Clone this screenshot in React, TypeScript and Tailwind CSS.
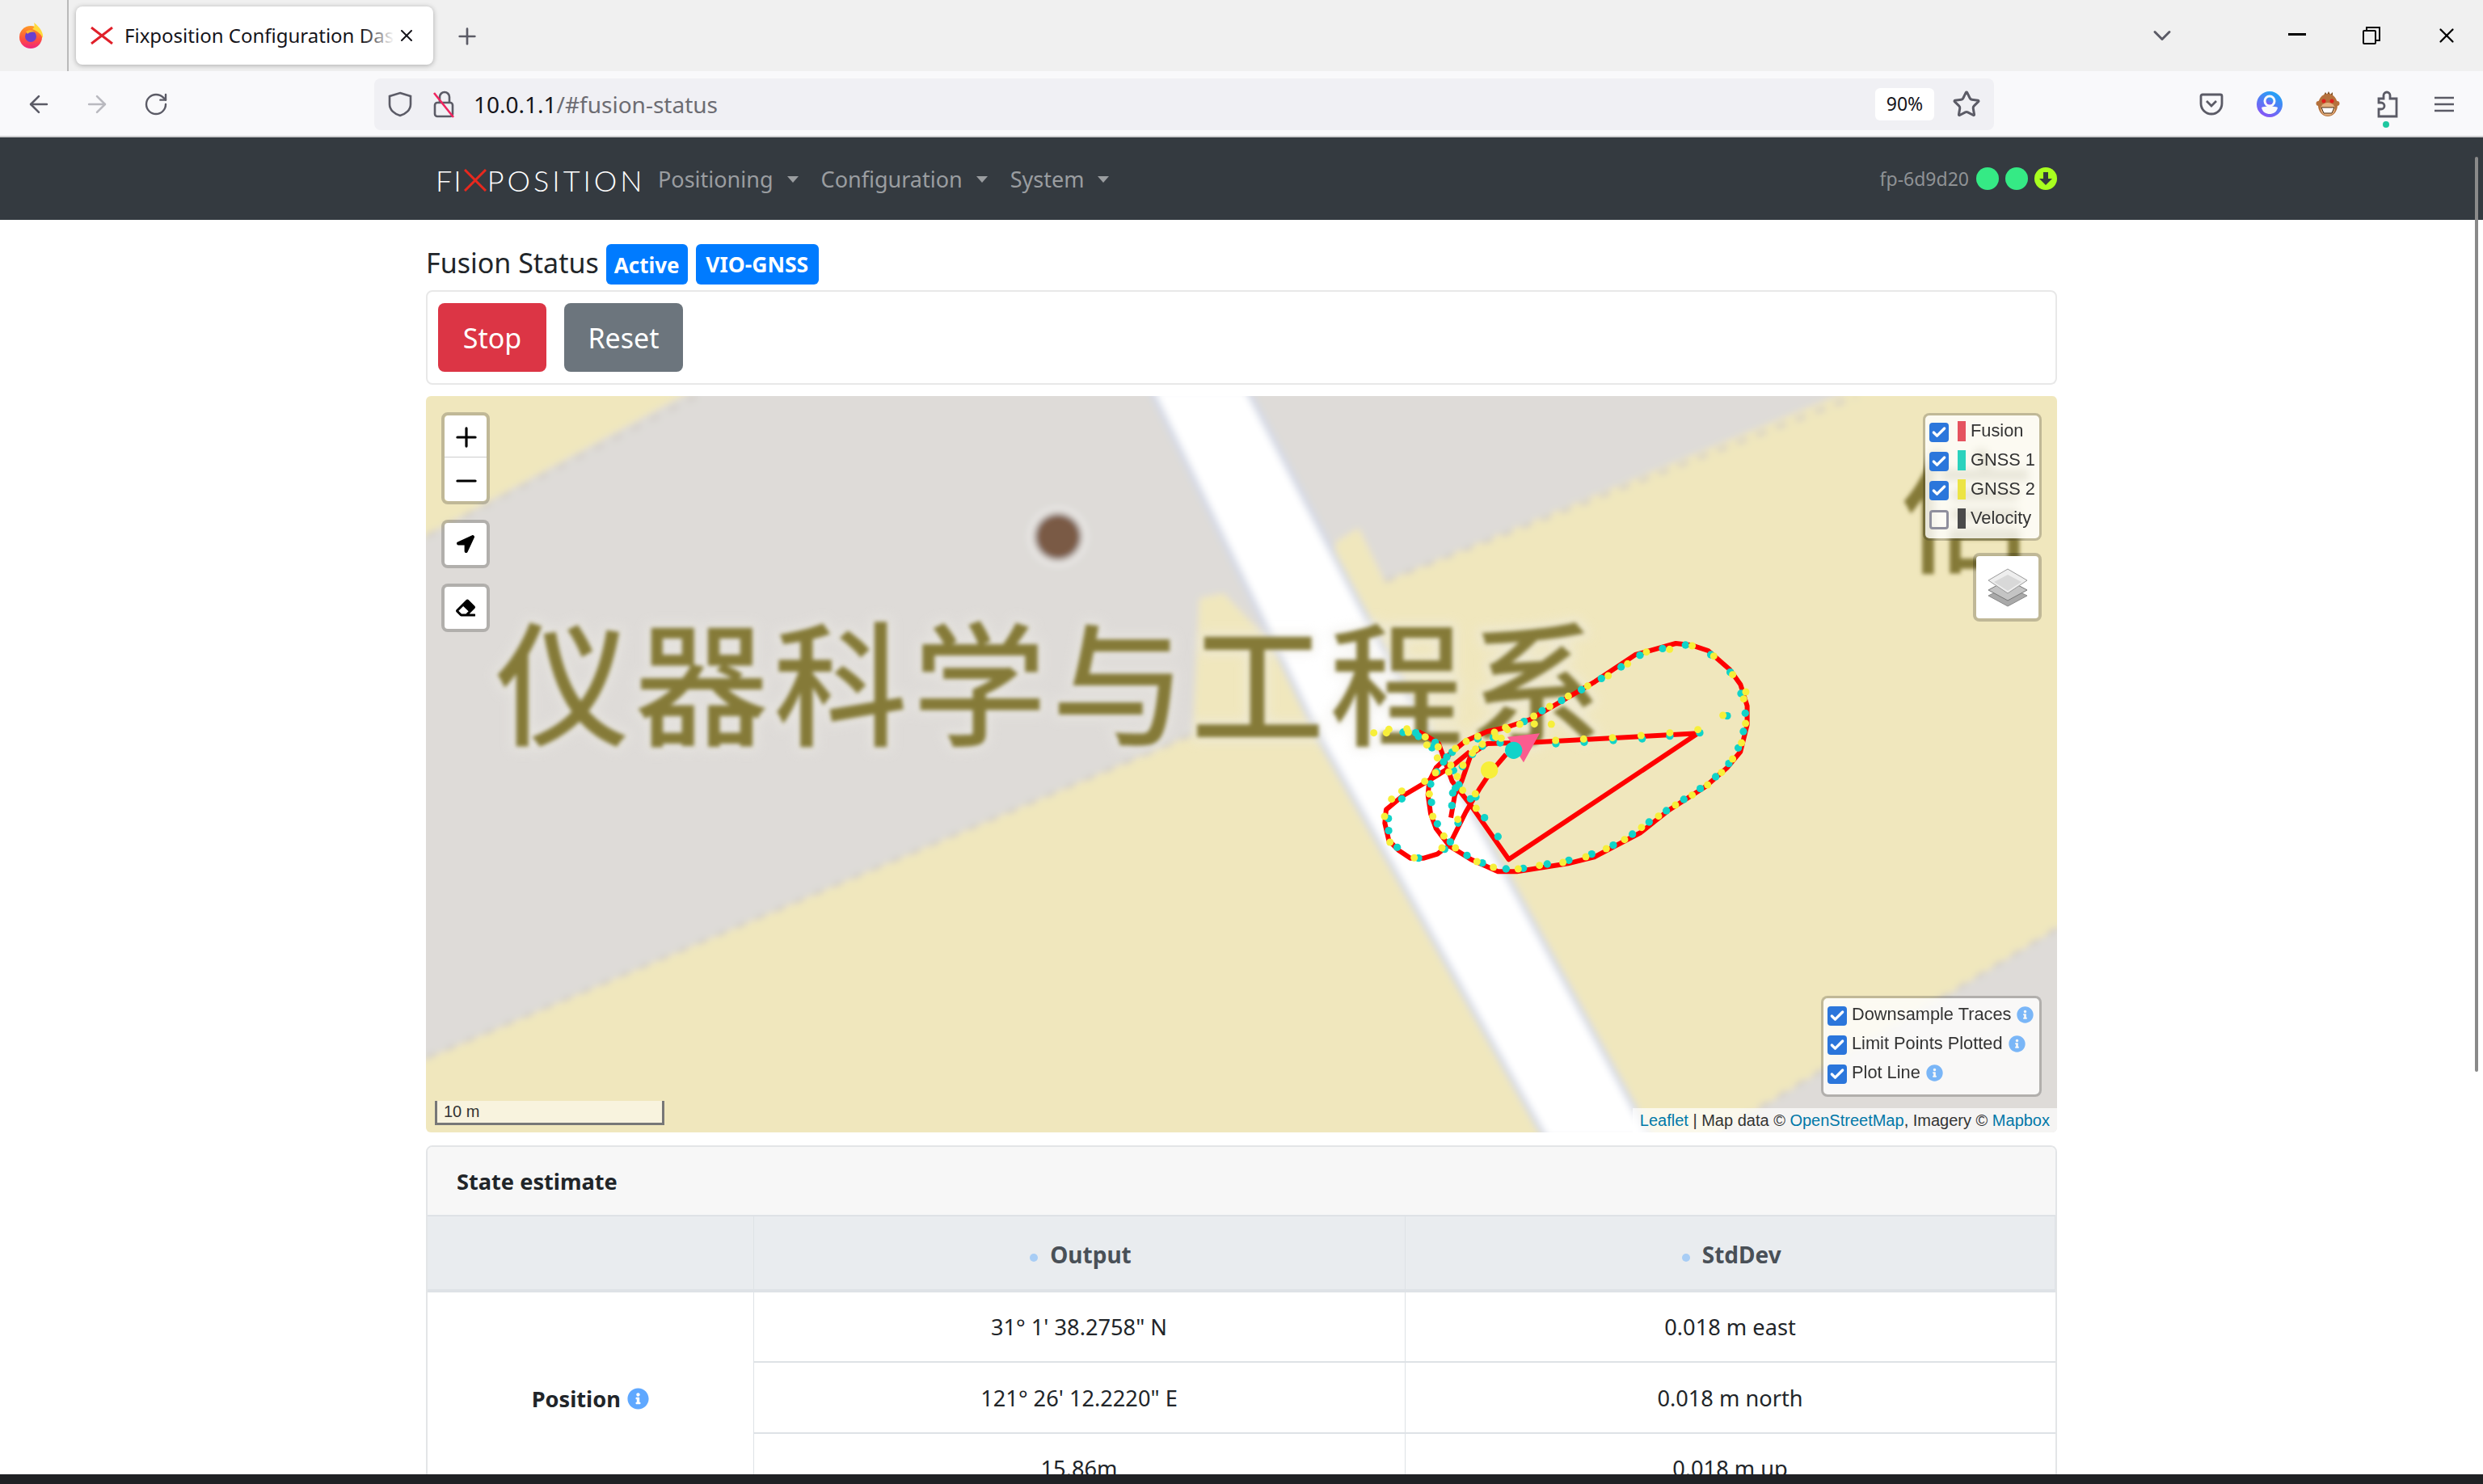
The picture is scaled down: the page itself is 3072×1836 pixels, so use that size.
import { ArrowLeft, ArrowRight, Check, ChevronDown, Minus, Plus, RotateCw, Star, X } from 'lucide-react';
import { FaEraser, FaInfoCircle, FaLocationArrow } from 'react-icons/fa';

// track coordinates are in a 3x space, see the scale() on the group below
const CYAN: number[][] = [
  [168, 408], [215, 410], [225, 423], [287, 445], [275, 465], [350, 482], [330, 500], [318, 518], [355, 550], [270, 600],
  [352, 633], [375, 603], [362, 615], [349, 680], [418, 655], [438, 648], [470, 725], [520, 795], [372, 745], [343, 815],
  [295, 748], [273, 668], [293, 555], [163, 655], [113, 728], [114, 773], [146, 835], [225, 875], [322, 842], [405, 865],
  [462, 893], [550, 915], [614, 913], [703, 897], [783, 883], [868, 860], [948, 827], [1019, 786], [1081, 741], [1145, 699],
  [1210, 657], [1271, 617], [1328, 573], [1377, 524], [1412, 466], [1431, 405], [1438, 337], [1422, 264], [1382, 185], [1310, 120],
  [1216, 84], [1131, 97], [1047, 122], [977, 165], [904, 208], [830, 250], [756, 290], [684, 328], [617, 368], [503, 428],
  [528, 447], [445, 432], [462, 460], [425, 490], [388, 535], [735, 450], [840, 445], [948, 438], [1055, 432], [1158, 422],
  [1269, 410], [1371, 347],
];

const YELLOW: number[][] = [
  [59, 410], [106, 410], [115, 397], [182, 395], [187, 408], [250, 425], [256, 455], [298, 462], [362, 468], [295, 503],
  [345, 530], [337, 555], [288, 558], [248, 590], [265, 637], [369, 572], [389, 623], [436, 636], [439, 690], [371, 731],
  [278, 720], [319, 793], [312, 837], [362, 837], [442, 888], [503, 909], [595, 915], [674, 902], [761, 891], [846, 870],
  [922, 840], [990, 806], [1053, 761], [1116, 719], [1179, 678], [1241, 641], [1298, 603], [1350, 557], [1391, 507], [1424, 447],
  [1439, 375], [1432, 284], [1440, 258], [1391, 194], [1321, 125], [1241, 87], [1157, 100], [1071, 110], [1001, 154], [929, 198],
  [853, 236], [781, 274], [712, 312], [653, 348], [601, 378], [655, 377], [718, 378], [555, 398], [548, 390], [507, 408],
  [512, 425], [532, 430], [402, 442], [445, 423], [462, 452], [437, 470], [425, 485], [390, 530], [125, 656], [163, 626],
  [99, 720], [119, 816], [209, 874], [734, 438], [838, 433], [945, 428], [1051, 420], [1158, 410], [1262, 398], [1355, 345],
];

const TRACK =
  'M345 725 L360 640 L385 590 L420 490 L480 450 L660 445 L1262 412 L560 880 L420 680 L350 590 L300 450 L260 425 L225 405 ' +
  'M550 490 L490 560 L450 620 L400 705 L375 755 L340 825 L295 860 L245 875 L195 875 L150 845 L115 810 L100 745 L105 695 L165 645 L275 580 L355 530 L415 480 ' +
  'M265 590 L260 640 L270 710 L290 765 L340 830 L420 880 L520 925 L590 925 L780 895 L880 870 L1050 780 L1150 700 L1290 610 L1370 540 L1420 480 L1445 380 L1445 310 L1420 230 L1380 175 L1300 105 L1240 85 L1180 78 L1030 120 L880 220 L640 360 L550 390 L480 405 L400 440 L340 490 L290 540 L265 590';

function MapCanvas() {
  return (
    <svg viewBox="0 0 2018 911" className="block w-[2018px] h-[911px]">
      <defs>
        <filter id="tile" x="-5%" y="-5%" width="110%" height="110%">
          <feGaussianBlur stdDeviation="4" />
        </filter>
        <filter id="halo" x="-5%" y="-20%" width="110%" height="140%">
          <feGaussianBlur stdDeviation="7" />
        </filter>
        <filter id="soft" x="-5%" y="-20%" width="110%" height="140%">
          <feGaussianBlur stdDeviation="2.5" />
        </filter>
        <filter id="arrow">
          <feGaussianBlur stdDeviation="1" />
        </filter>
      </defs>
      <g filter="url(#tile)">
        <rect x="-10" y="-10" width="2040" height="930" fill="#dedbd8" />
        <polygon points="-10,-10 335,-10 -10,178" fill="#f0e7bd" />
        <polygon points="-10,824 949,418 957,250 987,244 1040,300 1400,920 -10,920" fill="#f0e7bd" />
        <polygon points="1126,180 1154,163 1186,229 1770,-10 2030,-10 2030,652 1586,920 1480,920 1120,220" fill="#f0e7bd" />
        <polyline points="0,174 335,0" fill="none" stroke="#d2cec8" strokeWidth="5" strokeDasharray="14 12" />
        <polyline points="0,819 949,418" fill="none" stroke="#d2cec8" strokeWidth="5" strokeDasharray="14 12" />
        <polyline points="1186,229 1770,0" fill="none" stroke="#d2cec8" strokeWidth="5" strokeDasharray="14 12" />
        <polyline points="2018,659 1600,911" fill="none" stroke="#d2cec8" strokeWidth="5" strokeDasharray="14 12" />
        <polygon points="896,-10 1106,424 1202,593 1386,920 1516,920 1340,598 1154,256 1015,-10" fill="#ffffff" stroke="#d3d8e6" strokeWidth="7" />
        <circle cx="782" cy="174" r="36" fill="#eeedeb" />
        <circle cx="782" cy="174" r="29" fill="#7a5a44" />
      </g>
      <g fontFamily="'Noto Sans CJK SC', sans-serif" fontSize="166" fontWeight="500" letterSpacing="6">
        <text x="86" y="420" fill="#eeece6" stroke="#eeece6" strokeWidth="10" opacity="0.6" filter="url(#halo)">仪器科学与工程系</text>
        <text x="86" y="420" fill="#857a38" filter="url(#soft)">仪器科学与工程系</text>
        <text x="1824" y="205" fill="#857a38" filter="url(#soft)">信</text>
      </g>
      <g transform="translate(1153 280) scale(0.3333)">
        <path d={TRACK} fill="none" stroke="#ff0000" strokeWidth="18" strokeLinejoin="round" />
        {CYAN.map(([x, y], i) => (
          <circle key={i} cx={x} cy={y} r="14" fill="#10d3c9" />
        ))}
        {YELLOW.map(([x, y], i) => (
          <circle key={i} cx={x} cy={y} r="13.5" fill="#f7ef3a" />
        ))}
        <polygon points="555,425 675,412 615,520" fill="#fb5c8f" filter="url(#arrow)" />
        <circle cx="488" cy="548" r="32" fill="#f7ef3a" />
        <circle cx="578" cy="475" r="32" fill="#10d3c9" />
      </g>
    </svg>
  );
}

function Box({ on }: { on: boolean }) {
  if (!on) return <span className="block w-6 h-6 shrink-0 rounded-[4px] border-[3px] border-[#8f8f9d] bg-white/30" />;
  return (
    <span className="flex items-center justify-center w-6 h-6 shrink-0 rounded-[4px] bg-[#2b76db]">
      <Check size={20} strokeWidth={4} className="text-white" />
    </span>
  );
}

function MapControls() {
  return (
    <>
      <div className="absolute left-[19px] top-[20px] w-[60px] rounded-lg border-4 border-black/20 bg-clip-padding">
        <div className="flex h-[52px] items-center justify-center rounded-t-[5px] border-b border-[#ccc] bg-white pl-[2px] pt-[2px] text-black">
          <Plus size={38} strokeWidth={2} />
        </div>
        <div className="flex h-[54px] items-center justify-center rounded-b-[5px] bg-white pl-[2px] pt-[3px] text-black">
          <Minus size={38} strokeWidth={2} />
        </div>
      </div>
      <div className="absolute left-[19px] top-[153px] flex h-[60px] w-[60px] items-center justify-center rounded-lg border-4 border-black/20 bg-white bg-clip-padding">
        <FaLocationArrow size={22} className="text-black" />
      </div>
      <div className="absolute left-[19px] top-[232px] flex h-[60px] w-[60px] items-center justify-center rounded-lg border-4 border-black/20 bg-white bg-clip-padding">
        <FaEraser size={24} className="text-black" />
      </div>
    </>
  );
}

function LegendRow({ label, color, on }: { label: string; color: string; on: boolean }) {
  return (
    <div className="flex h-9 items-center">
      <Box on={on} />
      <span className={`ml-[11px] -mt-1 block h-[25px] w-[10px] ${color}`} />
      <span className="ml-[6px] -mt-1">{label}</span>
    </div>
  );
}

function OptionRow({ label }: { label: string }) {
  return (
    <div className="flex h-9 items-center">
      <Box on />
      <span className="ml-[6px] -mt-1">{label}</span>
      <FaInfoCircle size={21} className="ml-[7px] -mt-1 text-[#7ab6f7]" />
    </div>
  );
}

function MapOverlays() {
  return (
    <div className="font-['Liberation_Sans',sans-serif] text-[21.8px] text-[#333]">
      <MapControls />
      <div className="absolute right-[19px] top-[21px] w-[147px] rounded-lg border-[3px] border-black/20 bg-white/80 bg-clip-padding pl-[5px] pt-[3px] pb-[5px] backdrop-blur-[5px]">
        <LegendRow label="Fusion" color="bg-[#e5535f]" on />
        <LegendRow label="GNSS 1" color="bg-[#2bd2bd]" on />
        <LegendRow label="GNSS 2" color="bg-[#ece444]" on />
        <LegendRow label="Velocity" color="bg-[#4a4a4a]" on={false} />
      </div>
      <div className="absolute right-[19px] top-[194px] flex h-[85px] w-[85px] items-center justify-center rounded-lg border-4 border-black/20 bg-white bg-clip-padding">
        <svg width="50" height="48" viewBox="0 0 50 48">
          <polygon points="25,22 49,34 25,47 1,34" fill="#a9a9a9" stroke="#8a8a8a" />
          <polygon points="25,14 49,27 25,40 1,27" fill="#c4c4c4" stroke="#777" />
          <polygon points="25,1 49,15 25,31 1,15" fill="#eeeeee" stroke="#999" />
          <polygon points="25,8 42,17 25,28 8,17" fill="#d8d8d8" />
        </svg>
      </div>
      <div className="absolute right-[19px] top-[742px] w-[273px] rounded-lg border-[3px] border-black/20 bg-white/80 bg-clip-padding pl-[5px] pt-[4px] pb-[7px] backdrop-blur-[5px]">
        <OptionRow label="Downsample Traces" />
        <OptionRow label="Limit Points Plotted" />
        <OptionRow label="Plot Line" />
      </div>
      <div className="absolute bottom-[9px] left-[11px] h-[30px] w-[284px] border-x-[3px] border-b-[3px] border-[#777] bg-white/50 pl-[8px] text-[20px] leading-[26px] text-[#333]">
        10 m
      </div>
      <div className="absolute bottom-0 right-0 h-[30px] bg-white/70 px-[9px] text-[20px] leading-[30px] text-[#333]">
        <span className="text-[#0078a8]">Leaflet</span> | Map data © <span className="text-[#0078a8]">OpenStreetMap</span>, Imagery © <span className="text-[#0078a8]">Mapbox</span>
      </div>
    </div>
  );
}

function BrowserTabs() {
  return (
    <div className="flex h-[88px] bg-[#f0f0f0]">
      <div className="flex w-[85px] shrink-0 items-center justify-center border-r-2 border-[#b9b9b9] pr-[6px]">
        <svg width="32" height="34" viewBox="0 0 32 34">
          <defs>
            <linearGradient id="ff" x1="0" y1="0" x2="0" y2="1">
              <stop offset="0" stopColor="#ff9b24" />
              <stop offset="0.6" stopColor="#ff4f3f" />
              <stop offset="1" stopColor="#f0237f" />
            </linearGradient>
          </defs>
          <circle cx="15" cy="19" r="14" fill="url(#ff)" />
          <path d="M19 1 C27 7 31 14 30 20 C27 14 22 11 17 9 C20 7 20 4 19 1 Z" fill="#ffd93a" />
          <circle cx="15" cy="18" r="7" fill="#6a3fd0" />
          <path d="M9 12 C13 9 18 10 20 13 C16 12 13 13 11 15 Z" fill="#ffb52e" />
        </svg>
      </div>
      <div className="relative ml-[9px] mt-2 flex h-[72px] w-[442px] items-center rounded-lg bg-white pl-[18px] shadow-[0_1px_6px_rgba(0,0,0,0.3)]">
        <svg width="28" height="22" viewBox="0 0 28 22" className="shrink-0">
          <path d="M1 1 Q10 8 14 11 Q10 14 1 21 M27 1 Q18 8 14 11 Q18 14 27 21" fill="none" stroke="#e0202a" strokeWidth="3" />
        </svg>
        <div className="relative ml-[14px] w-[334px] overflow-hidden whitespace-nowrap text-[24px] text-[#15141a]">
          Fixposition Configuration Dashboard
          <span className="absolute inset-y-0 right-0 w-10 bg-gradient-to-r from-transparent to-white" />
        </div>
        <X size={24} strokeWidth={2} className="ml-[3px] shrink-0 text-[#15141a]" />
      </div>
      <Plus size={32} strokeWidth={2} className="ml-[26px] mt-[29px] text-[#5b5b66]" />
      <ChevronDown size={36} strokeWidth={2} className="ml-[2063px] mt-[26px] text-[#5b5b66]" />
      <svg width="22" height="4" viewBox="0 0 22 4" className="ml-[138px] mt-[41px] text-black">
        <rect width="22" height="3" fill="currentColor" />
      </svg>
      <svg width="22" height="22" viewBox="0 0 22 22" fill="none" stroke="black" strokeWidth="2" className="ml-[70px] mt-[33px]">
        <rect x="1" y="5" width="15" height="16" rx="1" />
        <path d="M5 5 V1 H21 V17 H16" />
      </svg>
      <X size={30} strokeWidth={1.8} className="ml-[67px] mt-[29px] text-black" />
    </div>
  );
}

function BrowserToolbar() {
  return (
    <div className="flex h-[82px] items-center border-b-2 border-[#cfcfd1] bg-[#f9f9fb] pt-[1px] text-[#5b5b66]">
      <ArrowLeft size={34} strokeWidth={1.8} className="ml-[31px]" />
      <ArrowRight size={34} strokeWidth={1.8} className="ml-[38px] text-[#b9b9bf]" />
      <RotateCw size={32} strokeWidth={1.8} className="ml-[40px]" />
      <div className="ml-[254px] flex h-16 w-[2004px] items-center rounded-lg bg-[#f0f0f4]">
        <svg width="30" height="32" viewBox="0 0 30 32" fill="none" stroke="#5b5b66" strokeWidth="2.6" className="ml-[17px]">
          <path d="M15 2 L28 6 V16 C28 23 22 28 15 30 C8 28 2 23 2 16 V6 Z" />
        </svg>
        <svg width="28" height="34" viewBox="0 0 28 34" fill="none" className="ml-[25px]">
          <path d="M9 15 V8 A6 6 0 0 1 21 8 V15" stroke="#5b5b66" strokeWidth="2.6" />
          <rect x="3" y="15" width="22" height="17" rx="3" stroke="#5b5b66" strokeWidth="2.6" />
          <path d="M2 3 L26 33" stroke="#f0245f" strokeWidth="2.6" />
        </svg>
        <div className="ml-[23px] text-[28px] text-[#15141a]">
          10.0.1.1<span className="text-[#6c6c72]">/#fusion-status</span>
        </div>
        <div className="ml-auto flex h-10 w-[73px] items-center justify-center rounded-md bg-white text-[23px] text-[#15141a]">90%</div>
        <Star size={36} strokeWidth={2} className="ml-[22px] mr-[16px]" />
      </div>
      <svg width="30" height="28" viewBox="0 0 30 28" fill="none" stroke="#5b5b66" strokeWidth="2.8" className="ml-[254px]">
        <path d="M4 2 H26 A2 2 0 0 1 28 4 V13 A13 13 0 0 1 2 13 V4 A2 2 0 0 1 4 2 Z" />
        <path d="M9 10 L15 16 L21 10" />
      </svg>
      <svg width="32" height="32" viewBox="0 0 32 32" className="ml-[41px]">
        <defs>
          <linearGradient id="acct" x1="0.7" y1="0" x2="0.2" y2="1">
            <stop offset="0" stopColor="#1fa6f5" />
            <stop offset="1" stopColor="#8e4ff5" />
          </linearGradient>
        </defs>
        <circle cx="16" cy="16" r="16" fill="url(#acct)" />
        <circle cx="16" cy="12" r="7.5" fill="#f9f9fb" />
        <circle cx="16" cy="12" r="4.5" fill="url(#acct)" />
        <path d="M6 20 C10 18 22 18 26 20 C25 26 20 28 16 28 C12 28 7 26 6 20 Z" fill="#f9f9fb" />
      </svg>
      <svg width="30" height="32" viewBox="0 0 30 32" className="ml-[41px]">
        <path d="M10 5 L12 1 L14 4 L16 0 L18 4 L21 1 L21 6 Z" fill="#7a4a1e" />
        <circle cx="3.5" cy="15" r="3" fill="#b5713c" />
        <circle cx="26.5" cy="15" r="3" fill="#b5713c" />
        <ellipse cx="15" cy="17" rx="12" ry="14" fill="#b5713c" />
        <ellipse cx="15" cy="22" rx="9" ry="8" fill="#e3b07f" />
        <circle cx="10" cy="12" r="2.5" fill="#e0201c" />
        <circle cx="20" cy="12" r="2.5" fill="#e0201c" />
        <path d="M7 20 H23 L20 27 H10 Z" fill="white" stroke="#4a2a10" strokeWidth="1" />
      </svg>
      <div className="relative ml-[44px]">
        <svg width="28" height="34" viewBox="0 0 28 34" fill="none" stroke="#5b5b66" strokeWidth="2.8" className="block">
          <path d="M14 2 A4 4 0 0 1 18 6 V10 H26 V32 H4 V23 H7 A4 4 0 0 0 7 15 H4 V10 H10 V6 A4 4 0 0 1 14 2 Z" />
        </svg>
        <span className="absolute -bottom-[12px] left-[9px] h-2 w-2 rounded-full bg-[#1fc7a0]" />
      </div>
      <svg width="26" height="22" viewBox="0 0 26 22" stroke="#5b5b66" strokeWidth="2.6" className="ml-[44px]">
        <path d="M1 3 H25 M1 11 H25 M1 19 H25" />
      </svg>
    </div>
  );
}

function NavItem({ label, className }: { label: string; className: string }) {
  return (
    <div className={`flex items-center pt-[2px] text-[27px] text-[#9a9da0] ${className}`}>
      <span>{label}</span>
      <span className="ml-[17px] h-0 w-0 border-x-[7.5px] border-t-[8px] border-x-transparent border-t-[#9a9da0]" />
    </div>
  );
}

function Navbar() {
  return (
    <div className="flex h-[102px] items-center bg-[#343a40] pl-[539px] pr-[527px]">
      <div className="flex w-[258px] shrink-0 items-center whitespace-nowrap pt-[3px] font-['Lato',sans-serif] text-[36px] font-light leading-none text-white">
        <span className="tracking-[2px]">FI</span>
        <svg width="28" height="28" viewBox="0 0 28 28" className="mx-[1px] shrink-0">
          <path d="M1 1 Q10 10 14 14 Q10 18 1 27 M27 1 Q18 10 14 14 Q18 18 27 27" fill="none" stroke="#e8281e" strokeWidth="3" />
        </svg>
        <span className="tracking-[4px]">POSITION</span>
      </div>
      <NavItem label="Positioning" className="ml-[17px]" />
      <NavItem label="Configuration" className="ml-[28px]" />
      <NavItem label="System" className="ml-[28px]" />
      <div className="ml-auto flex items-center">
        <span className="text-[23px] text-[#8f9295]">fp-6d9d20</span>
        <span className="ml-[9px] h-7 w-7 rounded-full bg-[#35ea85]" />
        <span className="ml-2 h-7 w-7 rounded-full bg-[#35ea85]" />
        <span className="ml-2 flex h-7 w-7 items-center justify-center rounded-full bg-[#a8ff1f]">
          <svg width="16" height="18" viewBox="0 0 16 18">
            <path d="M5 1 H11 V9 H16 L8 17 L0 9 H5 Z" fill="#343a40" />
          </svg>
        </span>
      </div>
    </div>
  );
}

function HeadCell({ label }: { label: string }) {
  return (
    <th className="border-x border-[#dee2e6] pl-[4px] pt-[4px] text-[28px] font-bold text-[#495057]">
      <span className="mr-[15px] inline-block h-[10px] w-[10px] -translate-y-[2px] rounded-full bg-[#a8cdf5]" />
      {label}
    </th>
  );
}

function StateTable() {
  return (
    <table className="w-full table-fixed border-collapse text-center text-[27.2px] text-[#212529]">
      <colgroup>
        <col className="w-[403px]" />
        <col className="w-[806px]" />
        <col />
      </colgroup>
      <thead>
        <tr className="h-[92px] border-b-4 border-[#dee2e6] bg-[#e9ecef]">
          <th className="border-r border-[#dee2e6]" />
          <HeadCell label="Output" />
          <HeadCell label="StdDev" />
        </tr>
      </thead>
      <tbody>
        <tr className="h-[88px] border-b-2 border-[#dee2e6]">
          <td rowSpan={3} className="border-r border-[#dee2e6] pt-[2px] font-bold">
            <span className="inline-flex items-center">
              Position
              <FaInfoCircle size={27} className="ml-[8px] text-[#5fa8ff]" />
            </span>
          </td>
          <td className="border-r border-[#dee2e6] pt-[2px]">31° 1' 38.2758" N</td>
          <td className="pt-[2px]">0.018 m east</td>
        </tr>
        <tr className="h-[88px] border-b-2 border-[#dee2e6]">
          <td className="border-r border-[#dee2e6] pt-[2px]">121° 26' 12.2220" E</td>
          <td className="pt-[2px]">0.018 m north</td>
        </tr>
        <tr className="h-[88px]">
          <td className="border-r border-[#dee2e6]">15.86m</td>
          <td>0.018 m up</td>
        </tr>
      </tbody>
    </table>
  );
}

export default function App() {
  return (
    <div className="relative flex h-[1836px] w-[3072px] flex-col overflow-hidden bg-white font-['Noto_Sans',sans-serif]">
      <BrowserTabs />
      <BrowserToolbar />
      <Navbar />
      <div className="min-h-0 flex-1 overflow-hidden">
        <div className="ml-[527px] w-[2018px] pt-[30px]">
          <div className="flex h-[50px] items-center text-[34px] text-[#212529]">
            <span className="-mt-[3px]">Fusion Status</span>
            <span className="ml-[9px] flex h-[50px] w-[101px] items-center justify-center rounded-md bg-[#007bff] pt-[2px] text-[26px] font-bold text-white">Active</span>
            <span className="ml-[10px] flex h-[50px] w-[152px] items-center justify-center rounded-md bg-[#007bff] pt-[2px] text-[26.5px] font-bold text-white">VIO-GNSS</span>
          </div>
          <div className="mt-[7px] flex h-[117px] gap-[22px] rounded-lg border-2 border-[#e8e8e8] pl-[13px] pt-[14px]">
            <button className="h-[85px] w-[134px] rounded-lg bg-[#dc3545] pt-[2px] text-[34px] text-white">Stop</button>
            <button className="h-[85px] w-[147px] rounded-lg bg-[#6c757d] pt-[2px] text-[34px] text-white">Reset</button>
          </div>
          <div className="relative mt-[14px] h-[911px] overflow-hidden rounded-md">
            <MapCanvas />
            <MapOverlays />
          </div>
          <div className="mt-[16px] overflow-hidden rounded-lg border-2 border-[#e3e5e7]">
            <div className="flex h-[86px] items-center border-b-2 border-[#dee2e6] bg-[#f7f7f7] pl-[36px] pt-[2px] text-[27.2px] font-bold text-[#212529]">State estimate</div>
            <StateTable />
          </div>
        </div>
      </div>
      <div className="h-3 shrink-0 bg-[#202124]" />
      <div className="absolute right-[6px] top-[194px] h-[1132px] w-1 rounded bg-[#8a8a8a]" />
    </div>
  );
}
